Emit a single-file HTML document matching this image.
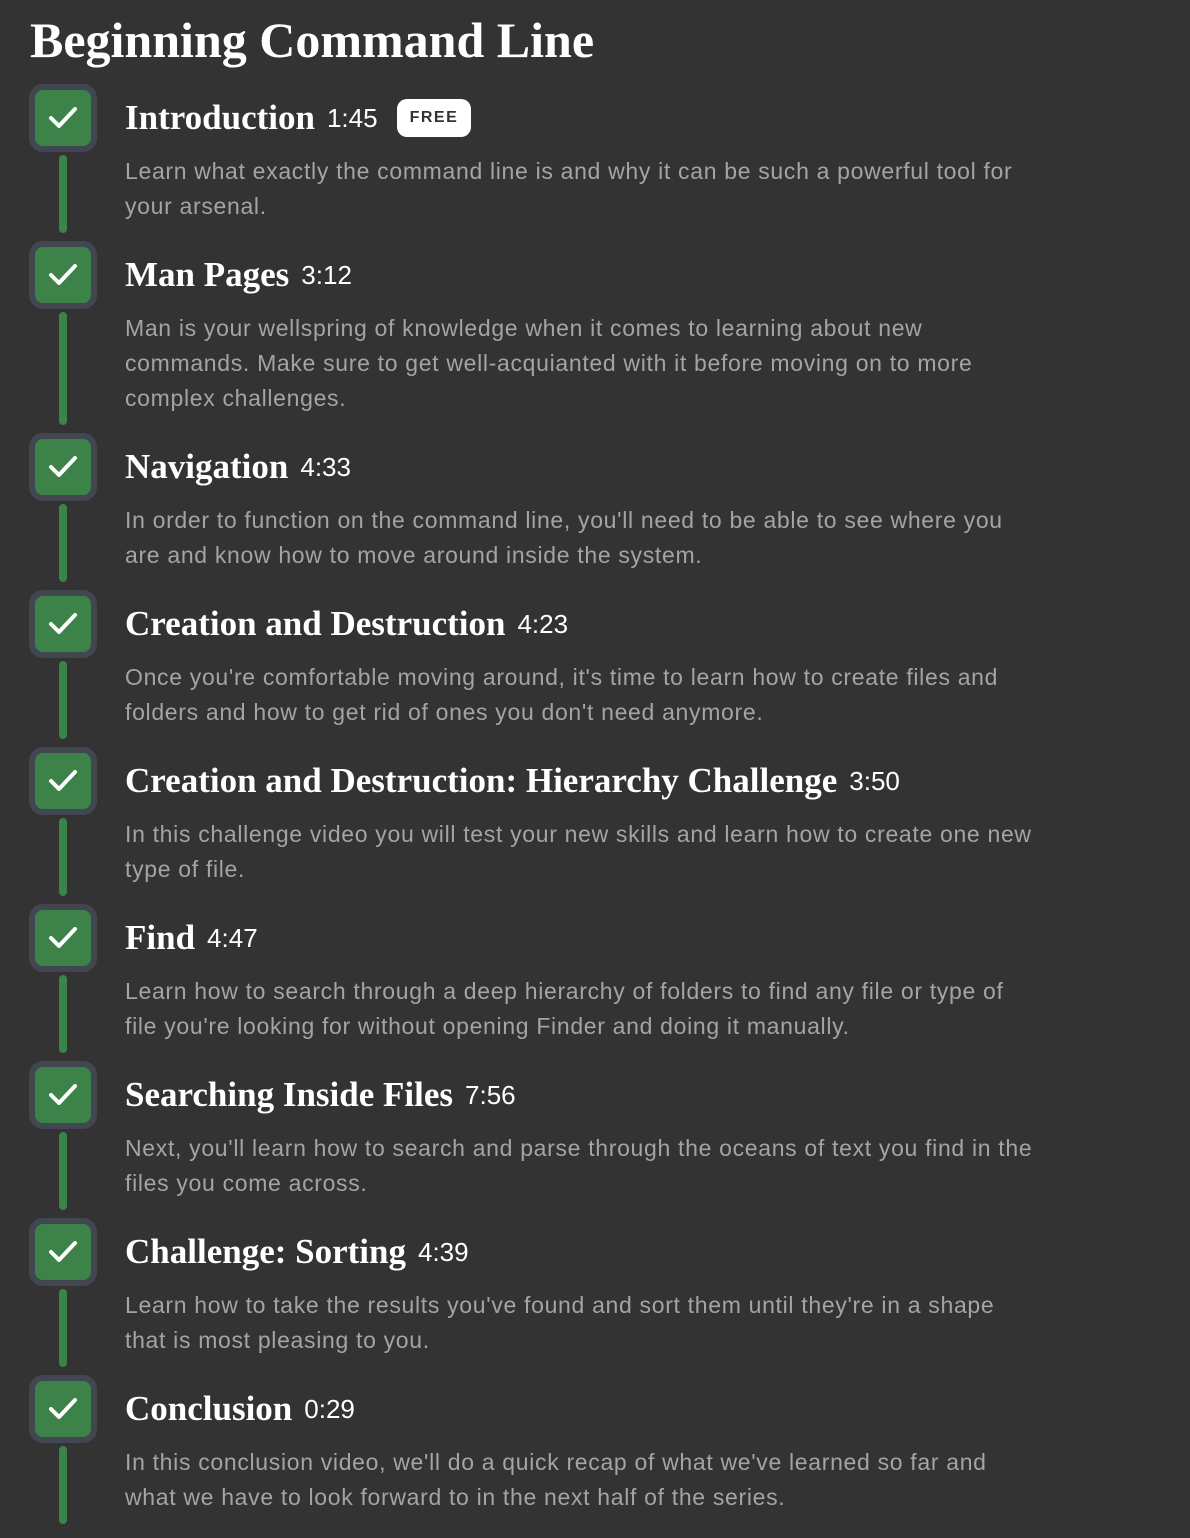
<!DOCTYPE html>
<html><head><meta charset="utf-8"><style>
body{margin:0;background:#333333;width:1190px;height:1538px;overflow:hidden;font-family:"Liberation Sans",sans-serif;}
h1{position:absolute;left:30px;top:12px;margin:0;font-family:"Liberation Serif",serif;font-weight:bold;font-size:50px;color:#fff;line-height:56px;}
.list{position:absolute;left:29px;top:84px;width:1100px;}
.item{position:relative;padding-left:96px;padding-bottom:17px;}
.box{position:absolute;left:0;top:0;width:56px;height:56px;border:6px solid #424650;border-radius:14px;background:#3c8249;}
.box svg{position:absolute;left:13px;top:14px;}
.line{position:absolute;left:30px;top:71px;bottom:8px;width:8px;border-radius:4px;background:#3c8249;}
.t{height:68px;display:flex;align-items:center;color:#fff;}
.t b{font-family:"Liberation Serif",serif;font-size:35px;}
.t span{font-size:26px;margin-left:12px;}
.free{margin-left:19px;background:#fff;color:#333;font-size:16px;font-weight:bold;letter-spacing:1.5px;padding:0 13px;height:38px;line-height:38px;border-radius:10px;}
.d{margin-top:2px;font-size:23px;letter-spacing:0.68px;line-height:35px;color:#a3a4a8;white-space:nowrap;}
</style></head><body>
<h1>Beginning Command Line</h1>
<div class="list">
<div class="item"><div class="box"><svg width="30" height="28" viewBox="0 0 30 28"><path d="M3 14l8 8L27 5" fill="none" stroke="#fff" stroke-width="4" stroke-linecap="round" stroke-linejoin="round"/></svg></div><div class="line"></div>
<div class="t"><b>Introduction</b><span>1:45</span><div class="free">FREE</div></div>
<div class="d">Learn what exactly the command line is and why it can be such a powerful tool for<br>your arsenal.</div></div>
<div class="item"><div class="box"><svg width="30" height="28" viewBox="0 0 30 28"><path d="M3 14l8 8L27 5" fill="none" stroke="#fff" stroke-width="4" stroke-linecap="round" stroke-linejoin="round"/></svg></div><div class="line"></div>
<div class="t"><b>Man Pages</b><span>3:12</span></div>
<div class="d">Man is your wellspring of knowledge when it comes to learning about new<br>commands. Make sure to get well-acquianted with it before moving on to more<br>complex challenges.</div></div>
<div class="item"><div class="box"><svg width="30" height="28" viewBox="0 0 30 28"><path d="M3 14l8 8L27 5" fill="none" stroke="#fff" stroke-width="4" stroke-linecap="round" stroke-linejoin="round"/></svg></div><div class="line"></div>
<div class="t"><b>Navigation</b><span>4:33</span></div>
<div class="d">In order to function on the command line, you'll need to be able to see where you<br>are and know how to move around inside the system.</div></div>
<div class="item"><div class="box"><svg width="30" height="28" viewBox="0 0 30 28"><path d="M3 14l8 8L27 5" fill="none" stroke="#fff" stroke-width="4" stroke-linecap="round" stroke-linejoin="round"/></svg></div><div class="line"></div>
<div class="t"><b>Creation and Destruction</b><span>4:23</span></div>
<div class="d">Once you're comfortable moving around, it's time to learn how to create files and<br>folders and how to get rid of ones you don't need anymore.</div></div>
<div class="item"><div class="box"><svg width="30" height="28" viewBox="0 0 30 28"><path d="M3 14l8 8L27 5" fill="none" stroke="#fff" stroke-width="4" stroke-linecap="round" stroke-linejoin="round"/></svg></div><div class="line"></div>
<div class="t"><b>Creation and Destruction: Hierarchy Challenge</b><span>3:50</span></div>
<div class="d">In this challenge video you will test your new skills and learn how to create one new<br>type of file.</div></div>
<div class="item"><div class="box"><svg width="30" height="28" viewBox="0 0 30 28"><path d="M3 14l8 8L27 5" fill="none" stroke="#fff" stroke-width="4" stroke-linecap="round" stroke-linejoin="round"/></svg></div><div class="line"></div>
<div class="t"><b>Find</b><span>4:47</span></div>
<div class="d">Learn how to search through a deep hierarchy of folders to find any file or type of<br>file you're looking for without opening Finder and doing it manually.</div></div>
<div class="item"><div class="box"><svg width="30" height="28" viewBox="0 0 30 28"><path d="M3 14l8 8L27 5" fill="none" stroke="#fff" stroke-width="4" stroke-linecap="round" stroke-linejoin="round"/></svg></div><div class="line"></div>
<div class="t"><b>Searching Inside Files</b><span>7:56</span></div>
<div class="d">Next, you'll learn how to search and parse through the oceans of text you find in the<br>files you come across.</div></div>
<div class="item"><div class="box"><svg width="30" height="28" viewBox="0 0 30 28"><path d="M3 14l8 8L27 5" fill="none" stroke="#fff" stroke-width="4" stroke-linecap="round" stroke-linejoin="round"/></svg></div><div class="line"></div>
<div class="t"><b>Challenge: Sorting</b><span>4:39</span></div>
<div class="d">Learn how to take the results you've found and sort them until they're in a shape<br>that is most pleasing to you.</div></div>
<div class="item"><div class="box"><svg width="30" height="28" viewBox="0 0 30 28"><path d="M3 14l8 8L27 5" fill="none" stroke="#fff" stroke-width="4" stroke-linecap="round" stroke-linejoin="round"/></svg></div><div class="line"></div>
<div class="t"><b>Conclusion</b><span>0:29</span></div>
<div class="d">In this conclusion video, we'll do a quick recap of what we've learned so far and<br>what we have to look forward to in the next half of the series.</div></div>
</div>
</body></html>
